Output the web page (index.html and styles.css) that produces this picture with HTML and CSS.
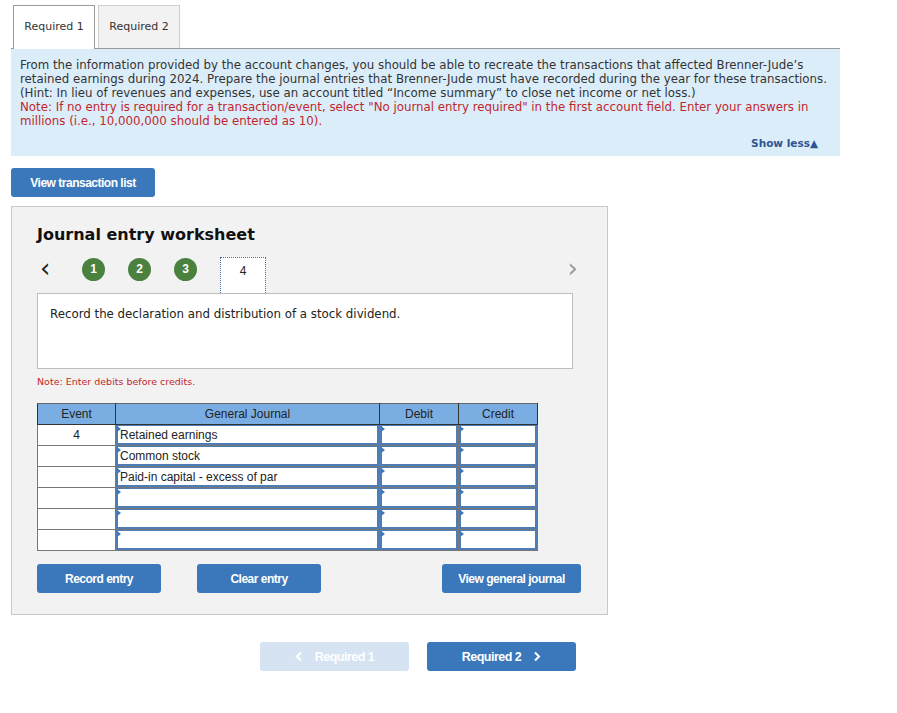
FILE: index.html
```html
<!DOCTYPE html>
<html lang="en">
<head>
    <meta charset="UTF-8">
    <meta name="viewport" content="width=device-width, initial-scale=1.0">
    <title>Journal Entry Worksheet</title>
    <link rel="stylesheet" href="styles.css">
</head>
<body>

    <div class="page">
        <div class="tabs">
            <div class="tab active">Required 1</div>
            <div class="tab">Required 2</div>
        </div>

        <div class="info">
            <p>From the information provided by the account changes, you should be able to recreate the transactions that affected Brenner-Jude’s retained earnings during 2024. Prepare the journal entries that Brenner-Jude must have recorded during the year for these transactions. (Hint: In lieu of revenues and expenses, use an account titled “Income summary” to close net income or net loss.)</p>
            <p class="red">Note: If no entry is required for a transaction/event, select "No journal entry required" in the first account field. Enter your answers in millions (i.e., 10,000,000 should be entered as 10).</p>
            <div class="show-less">Show less&#9650;</div>
        </div>

        <button class="btn btn-list">View transaction list</button>

        <div class="worksheet">
            <h2>Journal entry worksheet</h2>

            <div class="steps">
                <span class="arrow">&lsaquo;</span>
                <span class="step done">1</span>
                <span class="step done">2</span>
                <span class="step done">3</span>
                <span class="step current">4</span>
                <span class="arrow next">&rsaquo;</span>
            </div>

            <div class="desc">Record the declaration and distribution of a stock dividend.</div>

            <div class="note">Note: Enter debits before credits.</div>

            <table class="journal">
                <thead>
                    <tr>
                        <th class="c-event">Event</th>
                        <th class="c-acct">General Journal</th>
                        <th class="c-num">Debit</th>
                        <th class="c-num">Credit</th>
                    </tr>
                </thead>
                <tbody>
                    <tr>
                        <td class="event">4</td>
                        <td><div class="field">Retained earnings</div></td>
                        <td><div class="field"></div></td>
                        <td><div class="field"></div></td>
                    </tr>
                    <tr>
                        <td class="event"></td>
                        <td><div class="field">Common stock</div></td>
                        <td><div class="field"></div></td>
                        <td><div class="field"></div></td>
                    </tr>
                    <tr>
                        <td class="event"></td>
                        <td><div class="field">Paid-in capital - excess of par</div></td>
                        <td><div class="field"></div></td>
                        <td><div class="field"></div></td>
                    </tr>
                    <tr>
                        <td class="event"></td>
                        <td><div class="field"></div></td>
                        <td><div class="field"></div></td>
                        <td><div class="field"></div></td>
                    </tr>
                    <tr>
                        <td class="event"></td>
                        <td><div class="field"></div></td>
                        <td><div class="field"></div></td>
                        <td><div class="field"></div></td>
                    </tr>
                    <tr>
                        <td class="event"></td>
                        <td><div class="field"></div></td>
                        <td><div class="field"></div></td>
                        <td><div class="field"></div></td>
                    </tr>
                </tbody>
            </table>

            <div class="actions">
                <button class="btn btn-action">Record entry</button>
                <button class="btn btn-action">Clear entry</button>
                <button class="btn btn-action btn-wide">View general journal</button>
            </div>
        </div>

        <div class="pager">
            <button class="btn btn-page disabled">
                <svg class="chev" width="8" height="11" viewBox="0 0 8 11"><polyline points="6,1.5 2,5.5 6,9.5" fill="none" stroke="#fff" stroke-width="2"/></svg>
                Required 1
            </button>
            <button class="btn btn-page">
                Required 2
                <svg class="chev right" width="8" height="11" viewBox="0 0 8 11"><polyline points="2,1.5 6,5.5 2,9.5" fill="none" stroke="#fff" stroke-width="2"/></svg>
            </button>
        </div>
    </div>

</body>
</html>
```

FILE: styles.css
```css
body {
    margin: 0;
    font-family: "DejaVu Sans", Verdana, sans-serif;
    color: #333;
    background-color: #fff;
}
.page {
    width: 829px;
    padding: 5px 0 0 11px;
}
.tabs {
    display: flex;
    gap: 3px;
    padding-left: 2px;
    border-bottom: 1px solid #9a9a9a;
}
.tab {
    width: 82px;
    height: 43px;
    line-height: 42px;
    text-align: center;
    font-size: 11px;
    color: #333;
    background-color: #f2f2f2;
    border: 1px solid #cfcfcf;
    border-bottom: none;
    box-sizing: border-box;
}
.tab.active {
    background-color: #fff;
    border-color: #9a9a9a;
    height: 44px;
    margin-bottom: -1px;
}
.info {
    background-color: #dcedfa;
    padding: 9px 8px 6px 9px;
    font-size: 11.8px;
    line-height: 14px;
    color: #333;
}
.info p {
    margin: 0;
}
.info .red {
    color: #c0272d;
}
.show-less {
    text-align: right;
    margin-top: 8px;
    margin-right: 14px;
    font-size: 10.5px;
    font-weight: bold;
    color: #2c5590;
}
.btn {
    font-family: "Liberation Sans", Arial, sans-serif;
    font-weight: bold;
    font-size: 12px;
    letter-spacing: -0.5px;
    color: #fff;
    background-color: #3a77bb;
    border: none;
    border-radius: 3px;
    cursor: pointer;
}
.btn-list {
    display: block;
    margin-top: 12px;
    width: 144px;
    height: 29px;
}
.worksheet {
    margin-top: 9px;
    width: 597px;
    box-sizing: border-box;
    background-color: #f2f2f2;
    border: 1px solid #c8c8c8;
    padding: 17px 0 21px 25px;
}
.worksheet h2 {
    margin: 0;
    font-size: 16px;
    font-weight: bold;
    color: #111;
    line-height: 22px;
}
.steps {
    display: flex;
    align-items: flex-start;
    margin-top: 11px;
    width: 536px;
    height: 36px;
}
.arrow {
    font-family: "DejaVu Sans", sans-serif;
    font-size: 26px;
    line-height: 22px;
    color: #222;
    width: 18px;
    margin-left: 3px;
}
.arrow.next {
    margin-left: auto;
    color: #999;
    width: auto;
    margin-right: -5px;
}
.step {
    font-family: "Liberation Sans", Arial, sans-serif;
    font-size: 12px;
}
.step.done {
    width: 23px;
    height: 23px;
    line-height: 23px;
    border-radius: 50%;
    background-color: #4a813f;
    color: #fff;
    font-weight: bold;
    text-align: center;
    margin-left: 24px;
    margin-top: 1px;
}
.step.done + .step.done {
    margin-left: 23px;
}
.step.current {
    margin-left: 23px;
    width: 46px;
    height: 36px;
    box-sizing: border-box;
    background-color: #fff;
    border: 1px dotted #3d6eb0;
    border-bottom: none;
    text-align: center;
    line-height: 26px;
    color: #222;
}
.desc {
    width: 536px;
    height: 76px;
    box-sizing: border-box;
    background-color: #fff;
    border: 1px solid #bdbdbd;
    padding: 13px 12px;
    font-size: 11.8px;
    color: #222;
}
.note {
    margin-top: 7px;
    font-size: 9.5px;
    color: #c0272d;
}
.journal {
    margin-top: 16px;
    border-collapse: collapse;
    font-family: "Liberation Sans", Arial, sans-serif;
    font-size: 12px;
    color: #222;
}
.journal th {
    background-color: #7aaee3;
    font-weight: normal;
    height: 20px;
    padding: 0;
    border: 1px solid #333;
    border-top-color: #666;
    color: #222;
}
.c-event {
    width: 77px;
}
.c-acct {
    width: 263px;
}
.c-num {
    width: 78px;
}
.journal td {
    height: 20px;
    padding: 0;
    border: 1px solid #777;
    background-color: #fff;
}
.journal td.event {
    text-align: center;
}
.field {
    position: relative;
    height: 20px;
    box-sizing: border-box;
    border: 2px solid #4e7db6;
    border-top-width: 1px;
    padding-left: 2px;
    line-height: 18px;
    white-space: nowrap;
}
.field::before {
    content: "";
    position: absolute;
    left: -1px;
    top: 0;
    border-top: 3px solid transparent;
    border-bottom: 3px solid transparent;
    border-left: 4px solid #3a77bb;
}
.actions {
    display: flex;
    margin-top: 13px;
    width: 544px;
}
.btn-action {
    width: 124px;
    height: 29px;
}
.btn-action + .btn-action {
    margin-left: 36px;
}
.btn-action.btn-wide {
    width: 139px;
    margin-left: auto;
}
.pager {
    display: flex;
    justify-content: center;
    gap: 18px;
    width: 814px;
    margin-top: 27px;
}
.btn-page {
    display: flex;
    align-items: center;
    justify-content: center;
    gap: 12px;
    width: 149px;
    height: 29px;
    font-size: 12.5px;
}
.btn-page.disabled {
    background-color: #d6e3f2;
    color: #fff;
}
.chev {
    display: block;
}
```
